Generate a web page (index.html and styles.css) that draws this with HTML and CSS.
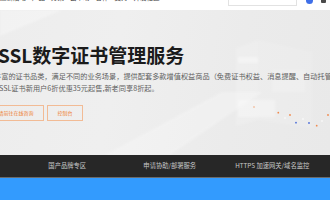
FILE: index.html
```html
<!DOCTYPE html>
<html lang="zh-CN">
<head>
<meta charset="utf-8">
<title>SSL数字证书管理服务</title>
<link rel="stylesheet" href="styles.css">
</head>
<body>
<header class="topbar">
  <nav class="nav">
    <span>最新活动</span><span>产品</span><span>方案</span><span>云市场</span><span>合作</span><span>支持</span><span>开发社区</span>
  </nav>
  <div class="tools">
    <div class="search">
      <span class="search-ph">搜索产品</span>
      <svg class="search-ico" width="5" height="5" viewBox="0 0 5 5"><path d="M0.5 1 L2.5 3 L4.5 1" fill="none" stroke="#b5b5b5" stroke-width="0.8"/></svg>
    </div>
    <span class="ico-blue"></span>
    <span class="ico-dark"></span>
  </div>
</header>

<section class="hero">
  <svg class="hero-art" viewBox="0 10 330 145" width="330" height="145" preserveAspectRatio="none">
    <defs>
      <filter id="soft" x="-20%" y="-20%" width="140%" height="140%"><feGaussianBlur stdDeviation="1.2"/></filter>
    </defs>
    <polygon points="0,10 62,10 0,36" fill="#ffffff" opacity="0.3" filter="url(#soft)"/>
    <polygon points="105,155 170,155 262,92 222,92" fill="#ffffff" opacity="0.25" filter="url(#soft)"/>
    <g filter="url(#soft)">
      <polygon points="236,48 258,40 258,120 236,126" fill="#ffffff" opacity="0.14"/>
      <polygon points="258,40 312,52 312,128 258,120" fill="#ffffff" opacity="0.1"/>
      <rect x="238" y="57" width="20" height="6" fill="#ffffff" opacity="0.35"/>
      <rect x="272" y="70" width="33" height="22" fill="#ffffff" opacity="0.15"/>
      <polygon points="238,100 275,100 275,117 238,117" fill="#ffffff" opacity="0.3"/>
    </g>
    <circle cx="254" cy="107" r="0.8" fill="#f2a77a"/>
    <circle cx="278.3" cy="112.7" r="0.9" fill="#f08a4e"/>
    <circle cx="290" cy="115" r="0.9" fill="#f08a4e"/>
    <circle cx="296" cy="122.7" r="0.9" fill="#4f6fd8"/>
    <circle cx="309" cy="123" r="0.9" fill="#4f6fd8"/>
    <circle cx="316.7" cy="125.7" r="0.9" fill="#f08a4e"/>
    <circle cx="328" cy="115" r="0.9" fill="#f08a4e"/>
    <circle cx="285" cy="118" r="0.8" fill="#ffffff"/>
    <circle cx="303" cy="119" r="0.8" fill="#ffffff"/>
    <circle cx="322" cy="121" r="0.8" fill="#ffffff"/>
  </svg>
  <div class="hero-content">
    <h1 class="title">SSL数字证书管理服务</h1>
    <p class="desc">丰富的证书品类，满足不同的业务场景，提供配套多款增值权益商品（免费证书权益、消息提醒、自动托管等）。</p>
    <p class="desc desc-2">SSL证书新用户6折优惠35元起售,新老同享8折起。</p>
    <div class="actions">
      <a class="btn">请前往在线咨询</a>
      <a class="btn">控制台</a>
    </div>
  </div>
</section>

<div class="tabs">
  <span class="tab">国产品牌专区</span>
  <span class="tab">申请协助/部署服务</span>
  <span class="tab">HTTPS 加速网关/域名监控</span>
</div>
<div class="band"></div>
</body>
</html>
```

FILE: styles.css
```css
html, body {
  margin: 0;
  padding: 0;
}
body {
  width: 330px;
  height: 200px;
  overflow: hidden;
  background: #339bfe;
  font-family: "Noto Sans CJK SC", "Noto Sans", sans-serif;
}

.topbar {
  height: 10px;
  background: #ffffff;
  display: flex;
  justify-content: space-between;
  align-items: flex-start;
  overflow: hidden;
}
.nav {
  display: flex;
  gap: 6px;
  margin-top: -7.5px;
  font-size: 6.5px;
  line-height: 8px;
  color: #3a3a3a;
  white-space: nowrap;
}
.tools {
  display: flex;
  align-items: flex-start;
  margin-right: 4px;
}
.search {
  width: 69px;
  height: 20px;
  margin-top: -14px;
  box-sizing: border-box;
  border: 1px solid #e2e2e2;
  background: #fff;
  display: flex;
  align-items: flex-end;
  justify-content: space-between;
  padding: 0 4px 3px 6px;
  margin-right: 9px;
}
.search-ph {
  font-size: 6px;
  line-height: 6px;
  color: #c2c2c2;
  margin-bottom: 4px;
}
.search-ico {
  display: block;
}
.ico-blue {
  width: 7px;
  height: 7px;
  margin-top: -3px;
  border-radius: 50%;
  background: #3f6fe8;
  margin-right: 8px;
}
.ico-dark {
  width: 5px;
  height: 6px;
  margin-top: -3px;
  border-radius: 1px;
  background: #4a4a4a;
}

.hero {
  position: relative;
  height: 145px;
  overflow: hidden;
  background: linear-gradient(100deg, #ededed 0%, #efefef 35%, #ebebeb 70%, #e9e9e9 100%);
}
.hero-art {
  position: absolute;
  left: 0;
  top: 0;
  display: block;
}
.hero-content {
  position: relative;
  margin-left: -6px;
  padding-top: 35px;
}
.title {
  margin: 0 0 0 4px;
  font-size: 19px;
  line-height: 19px;
  font-weight: 700;
  color: #1b1b1b;
  white-space: nowrap;
}
.desc {
  margin: 0;
  font-size: 7.2px;
  line-height: 12px;
  color: #5e5e5e;
  white-space: nowrap;
}
.title + .desc {
  margin-top: 6px;
}
.desc-2 {
  padding-left: 5px;
}
.actions {
  display: flex;
  gap: 3px;
  margin: 11px 0 0 -6px;
}
.btn {
  height: 16px;
  box-sizing: border-box;
  padding: 0 9.5px;
  border: 1px solid #f2bb95;
  color: #ee7b2e;
  font-size: 5px;
  line-height: 14px;
  white-space: nowrap;
}

.tabs {
  height: 22px;
  background: #272727;
  border-bottom: 1px solid #6b6b6b;
  display: grid;
  grid-template-columns: repeat(3, 102.5px);
  padding-left: 16px;
  align-items: center;
}
.tab {
  text-align: center;
  font-size: 6.3px;
  line-height: 8px;
  color: #c9c9c9;
  white-space: nowrap;
}
.band {
  height: 30px;
  background: #339bfe;
}
```
